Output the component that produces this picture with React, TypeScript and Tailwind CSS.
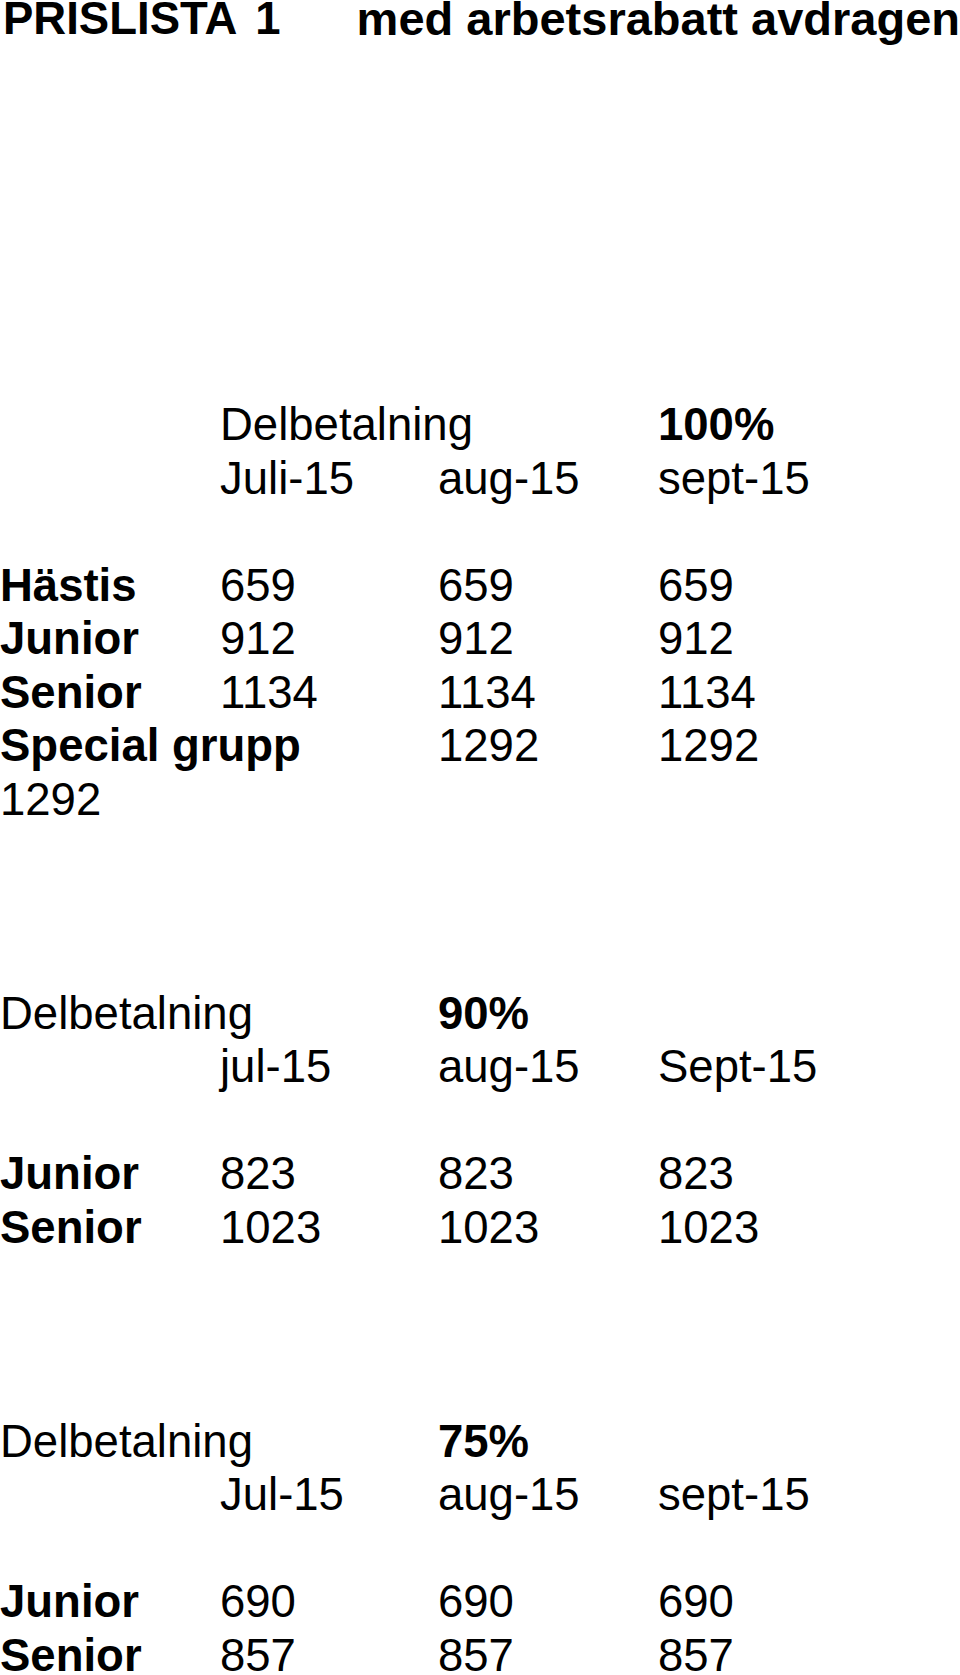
import React from 'react';

type Cell = { text: string; bold?: boolean } | null;
type Row = Cell[];

const b = (text: string): Cell => ({ text, bold: true });
const n = (text: string): Cell => ({ text });
const blank: Row = [];

// price list, one entry per printed line (blank lines kept as empty rows)
const rows: Row[] = [
  [null, n('Delbetalning'), null, b('100%')],
  [null, n('Juli-15'), n('aug-15'), n('sept-15')],
  blank,
  [b('Hästis'), n('659'), n('659'), n('659')],
  [b('Junior'), n('912'), n('912'), n('912')],
  [b('Senior'), n('1134'), n('1134'), n('1134')],
  [b('Special grupp'), null, n('1292'), n('1292')],
  [n('1292')],
  blank,
  blank,
  blank,
  [n('Delbetalning'), null, b('90%')],
  [null, n('jul-15'), n('aug-15'), n('Sept-15')],
  blank,
  [b('Junior'), n('823'), n('823'), n('823')],
  [b('Senior'), n('1023'), n('1023'), n('1023')],
  blank,
  blank,
  blank,
  [n('Delbetalning'), null, b('75%')],
  [null, n('Jul-15'), n('aug-15'), n('sept-15')],
  blank,
  [b('Junior'), n('690'), n('690'), n('690')],
  [b('Senior'), n('857'), n('857'), n('857')],
];

const PriceRow: React.FC<{ row: Row }> = ({ row }) => (
  <div className="grid grid-cols-[220px_218px_220px_1fr] h-[53.5px] leading-[53.5px]">
    {[0, 1, 2, 3].map((i) => {
      const cell = row[i];
      return (
        <div key={i} className="whitespace-nowrap overflow-visible">
          {cell ? <span className={cell.bold ? 'font-bold' : ''}>{cell.text}</span> : null}
        </div>
      );
    })}
  </div>
);

export default function App() {
  return (
    <div className="w-[960px] h-[1675px] overflow-hidden bg-white text-black font-['Liberation_Sans',Arial,sans-serif]">
      {/* Title */}
      <div className="flex h-[38px] leading-[38px] font-bold whitespace-nowrap">
        <div className="w-[357px] pl-[3px] text-[45.5px]">
          PRISLISTA<span className="ml-[18px]">1</span>
        </div>
        <div className="text-[47px]">med arbetsrabatt avdragen</div>
      </div>

      {/* Price tables */}
      <div className="mt-[360px] text-[45.5px]">
        {rows.map((row, i) => (
          <PriceRow key={i} row={row} />
        ))}
      </div>
    </div>
  );
}
